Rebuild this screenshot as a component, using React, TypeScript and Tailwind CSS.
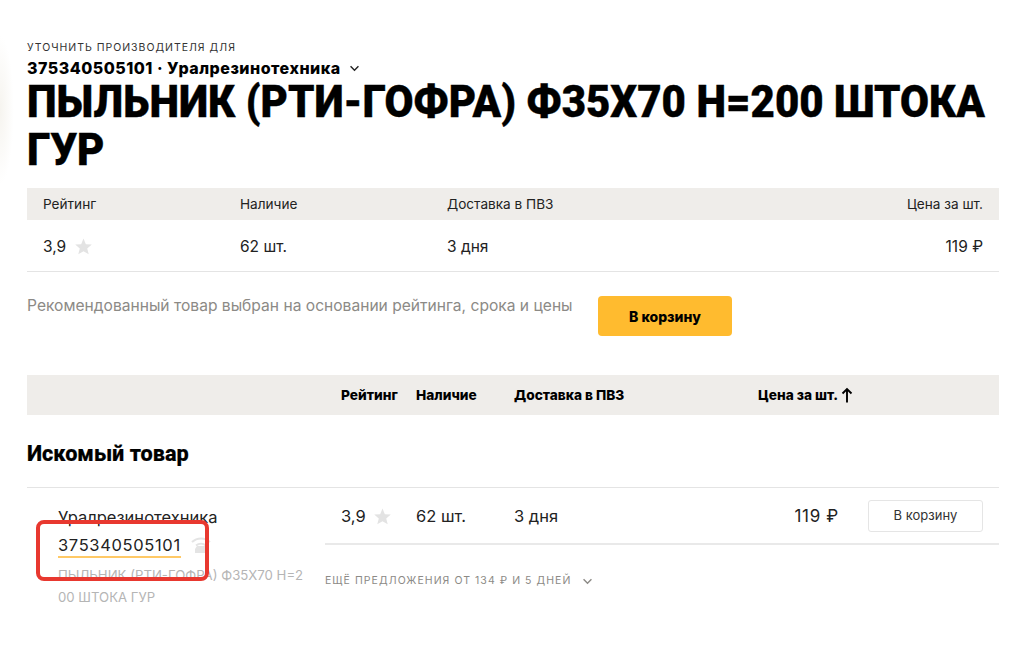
import React from "react";

const sans = "font-['Inter','Liberation_Sans',sans-serif]";

function Star({ className }: { className?: string }) {
  return (
    <svg viewBox="0 0 16 16" className={className} fill="#e3e3e3">
      <path d="M8 0.5l2.2 5.300 5.600.4-4.300 3.600 1.400 5.600L8 12.400l-4.900 3 1.400-5.600L.2 6.200l5.600-.4z" />
    </svg>
  );
}

function Chevron({ className, color }: { className?: string; color: string }) {
  return (
    <svg viewBox="0 0 12 8" className={className} fill="none" stroke={color} strokeWidth="1.6">
      <path d="M1.500 1.500L6 6l4.500-4.500" />
    </svg>
  );
}

export default function App() {
  return (
    <div className={`${sans} relative w-[1024px] h-[655px] overflow-hidden bg-white pl-[27px] pr-[25px] pt-[41px] text-[#111]`}>
      <div className="absolute left-0 top-[35px] h-[150px] w-[14px] bg-[radial-gradient(ellipse_at_left,#f6f4ef,transparent_70%)]" />

      <div className="relative text-[10.5px] leading-[14px] tracking-[0.98px] text-[#333]">УТОЧНИТЬ ПРОИЗВОДИТЕЛЯ ДЛЯ</div>
      <div className="relative flex items-center gap-[8px] mt-[5px] h-[17px] text-[16px] leading-[17px] font-extrabold tracking-[0.5px] text-black">
        <span>375340505101 · Уралрезинотехника</span>
        <Chevron className="w-[11px] h-[7px]" color="#222" />
      </div>
      <h1 className="relative mt-[1px] w-[1040px] origin-left [transform:scaleX(0.934)] font-['Roboto',sans-serif] text-[45px] leading-[48px] font-black text-black [-webkit-text-stroke:0.4px_black]">
        ПЫЛЬНИК (РТИ-ГОФРА) Ф35Х70 Н=200 ШТОКА ГУР
      </h1>

      <div className="mt-[14px] grid grid-cols-[197px_207px_1fr_auto] items-center h-[32px] px-[16px] bg-[#efedea] text-[13.6px] text-[#222]">
        <span>Рейтинг</span>
        <span>Наличие</span>
        <span>Доставка в ПВЗ</span>
        <span>Цена за шт.</span>
      </div>
      <div className="grid grid-cols-[197px_207px_1fr_auto] items-center h-[52px] pt-[2px] px-[16px] border-b border-[#e4e4e4] text-[15.5px] text-[#222]">
        <span className="flex items-center gap-[9px]">
          3,9 <Star className="w-[17px] h-[17px]" />
        </span>
        <span>62 шт.</span>
        <span>3 дня</span>
        <span>119 ₽</span>
      </div>

      <div className="flex items-start mt-[24px] h-[40px]">
        <p className="w-[571px] text-[15.6px] leading-[20px] text-[#8c8a86]">
          Рекомендованный товар выбран на основании рейтинга, срока и цены
        </p>
        <button className="w-[134px] h-[40px] rounded-[4px] bg-[#ffbb2f] text-[14px] font-extrabold text-black">В корзину</button>
      </div>

      <div className="mt-[39px] flex items-center h-[40px] bg-[#efedea] text-[13.7px] font-extrabold text-black">
        <span className="ml-[314px] w-[75px]">Рейтинг</span>
        <span className="w-[98px]">Наличие</span>
        <span className="w-[244px]">Доставка в ПВЗ</span>
        <span className="flex items-center gap-[3px]">
          Цена за шт.
          <svg viewBox="0 0 12 16" className="w-[12px] h-[16px]" fill="none" stroke="#000" strokeWidth="1.900">
            <path d="M6 15.500V2M1.500 6.500L6 2l4.500 4.500" />
          </svg>
        </span>
      </div>

      <h2 className="mt-[26px] w-[200px] text-[22px] leading-[26px] font-['Roboto',sans-serif] font-extrabold text-black [transform:scaleX(0.985)] origin-left [-webkit-text-stroke:0.2px_black]">Искомый товар</h2>

      <div className="mt-[20px] border-t border-[#e4e4e4] flex">
        <div className="w-[298px] pl-[31px] pt-[19px] shrink-0">
          <div className="text-[16.500px] leading-[20px] text-[#222]">Уралрезинотехника</div>
          <div className="mt-[8px] flex items-start gap-[8px]">
            <span className="border-b-2 border-[#ffc966] text-[16.500px] leading-[20px] tracking-[0.65px] pb-[1px] text-[#222]">375340505101</span>
            <svg viewBox="0 0 24 22" className="w-[24px] h-[22px] mt-[-2px]" fill="none" stroke="#e4e4e4" strokeWidth="2">
              <path d="M3 9a13 13 0 0 1 18 0M7 12.500a8 8 0 0 1 10 0" />
              <path d="M6 20v-4l2-3h8l2 3v4z" fill="#e4e4e4" stroke="none" />
            </svg>
          </div>
          <div className="mt-[6px] w-[248px] break-all text-[13.200px] leading-[22px] text-[#b5b5b5]">
            ПЫЛЬНИК (РТИ-ГОФРА) Ф35Х70 Н=200 ШТОКА ГУР
          </div>
        </div>
        <div className="flex-1">
          <div className="h-[57px] border-b-2 border-[#e9e9e9] flex items-center text-[16.500px] text-[#222]">
            <span className="ml-[16px] mt-[2px] w-[75px] flex items-center gap-[8px]">
              3,9 <Star className="w-[17px] h-[17px]" />
            </span>
            <span className="w-[98px] mt-[2px]">62 шт.</span>
            <span className="w-[110px] mt-[2px]">3 дня</span>
            <span className="w-[215px] mt-[2px] text-right text-[17px] tracking-[0.7px]">119 ₽</span>
            <button className="ml-[29px] w-[115px] h-[32px] pt-[1px] border border-[#e5e5e5] rounded-[3px] text-[13px] text-[#333] bg-white">В корзину</button>
          </div>
          <div className="mt-[29px] flex items-center gap-[11px] text-[10.500px] leading-[14px] tracking-[1.05px] text-[#8c8a86]">
            <span>ЕЩЁ ПРЕДЛОЖЕНИЯ ОТ 134 ₽ И 5 ДНЕЙ</span>
            <Chevron className="w-[11px] h-[7px]" color="#8c8a86" />
          </div>
        </div>
      </div>

      <div className="absolute left-[36px] top-[520px] w-[173px] h-[61px] border-[4px] border-[#e8382f] rounded-[8px]" />
    </div>
  );
}
